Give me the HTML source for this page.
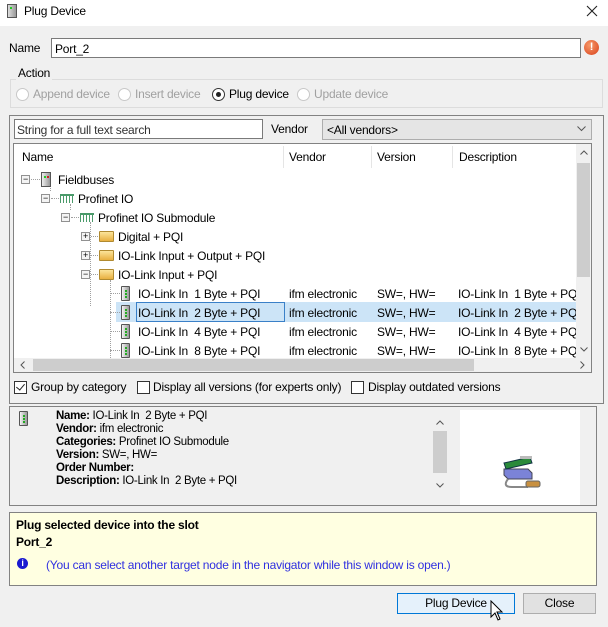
<!DOCTYPE html>
<html><head><meta charset="utf-8"><style>
*{margin:0;padding:0;box-sizing:border-box}
body{width:608px;height:627px;background:#f0f0f0;font-family:"Liberation Sans",sans-serif;font-size:12px;color:#000;position:relative;overflow:hidden;letter-spacing:-0.2px}
.a{position:absolute;white-space:nowrap}
.t{position:absolute;white-space:nowrap;line-height:14px}
.g{color:#a0a0a0}
.rad{position:absolute;width:13px;height:13px;border-radius:50%;border:1px solid #c8c8c8;background:#fff}
.cb{position:absolute;width:13px;height:13px;border:1px solid #333;background:#fff}
.exp{position:absolute;width:9px;height:9px;border:1px solid #919191;background:#f4f4f4;font-size:9px;line-height:7px;text-align:center;color:#000}
.dot{position:absolute;border-top:1px dotted #a0a0a0;height:0}
.vdot{position:absolute;border-left:1px dotted #a0a0a0;width:0}
.dev{position:absolute;width:9px;height:15px;border:1px solid #555;background:linear-gradient(90deg,#f4f4f4,#999);border-radius:1px}
.dev:after{content:"";position:absolute;left:3px;top:3px;width:2px;height:8px;background:repeating-linear-gradient(#2a2 0 2px,transparent 2px 3px)}
.fold{position:absolute;width:15px;height:11px;background:linear-gradient(#fbe49a,#e8b040);border:1px solid #b08a30;border-radius:1px}
.net{position:absolute;width:14px;height:9px;border-top:2px solid #4a9a6a;background:repeating-linear-gradient(90deg,#4a9a6a 0 1px,transparent 1px 3px)}
svg.c{position:absolute}
</style></head><body>
<div class="a" style="left:0;top:0;width:608px;height:26px;background:#fff"></div>
<div class="a" style="left:7px;top:4px;width:10px;height:14px;border:1px solid #555;background:linear-gradient(90deg,#ddd,#999)"><div style="position:absolute;left:2px;top:2px;width:2px;height:2px;background:#2c2"></div></div>
<div class="a" style="left:24px;top:4px;font-size:12px">Plug Device</div>
<svg class="c" style="left:586px;top:5px" width="12" height="12" viewBox="0 0 12 12"><path d="M1 1L11 11M11 1L1 11" stroke="#222" stroke-width="1.1"/></svg>
<div class="a" style="left:9px;top:41px">Name</div>
<div class="a" style="left:51px;top:38px;width:530px;height:20px;border:1px solid #7a7a7a;background:#fff;padding:3px 3px">Port_2</div>
<div class="a" style="left:584px;top:40px;width:15px;height:15px;border-radius:50%;background:radial-gradient(circle at 40% 35%,#f79a6a,#d8401a);color:#fff;font-weight:bold;font-size:11px;text-align:center;line-height:15px">!</div>
<div class="a" style="left:10px;top:79px;width:593px;height:29px;border:1px solid #dcdcdc"></div>
<div class="a" style="left:16px;top:66px;background:#f0f0f0;padding:0 2px">Action</div>
<div class="rad" style="left:16px;top:88px"></div><div class="a g" style="left:33px;top:87px">Append device</div>
<div class="rad" style="left:118px;top:88px"></div><div class="a g" style="left:135px;top:87px">Insert device</div>
<div class="rad" style="left:212px;top:88px;border-color:#333"><div style="position:absolute;left:3px;top:3px;width:5px;height:5px;border-radius:50%;background:#222"></div></div><div class="a" style="left:229px;top:87px">Plug device</div>
<div class="rad" style="left:297px;top:88px"></div><div class="a g" style="left:314px;top:87px">Update device</div>
<div class="a" style="left:9px;top:115px;width:595px;height:289px;border:1px solid #828282"></div>
<div class="a" style="left:14px;top:119px;width:249px;height:20px;border:1px solid #7a7a7a;background:#fff;padding:3px 2px;color:#333">String for a full text search</div>
<div class="a" style="left:271px;top:122px">Vendor</div>
<div class="a" style="left:322px;top:119px;width:270px;height:21px;border:1px solid #adadad;background:#e5e5e5;padding:3px 4px">&lt;All vendors&gt;</div>
<svg class="c" style="left:577px;top:126px" width="9" height="6" viewBox="0 0 9 6"><path d="M0.5 0.5L4.5 4.5L8.5 0.5" fill="none" stroke="#555"/></svg>
<div class="a" style="left:13px;top:143px;width:579px;height:230px;border:1px solid #828282;background:#fff;overflow:hidden">
 <div class="a" style="left:269px;top:2px;width:1px;height:22px;background:#e5e5e5"></div>
 <div class="a" style="left:357px;top:2px;width:1px;height:22px;background:#e5e5e5"></div>
 <div class="a" style="left:438px;top:2px;width:1px;height:22px;background:#e5e5e5"></div>
 <div class="t" style="left:8px;top:6px">Name</div>
 <div class="t" style="left:275px;top:6px">Vendor</div>
 <div class="t" style="left:363px;top:6px">Version</div>
 <div class="t" style="left:445px;top:6px">Description</div>
 <div class="a" style="left:102px;top:158px;width:460px;height:20px;background:#cce4f7"></div>
 <div class="a" style="left:122px;top:158px;width:149px;height:20px;border:1px solid #3a80c8"></div>
 <div class="vdot" style="left:36px;top:41px;height:6px"></div>
 <div class="vdot" style="left:56px;top:60px;height:6px"></div>
 <div class="vdot" style="left:76px;top:78px;height:84px"></div>
 <div class="vdot" style="left:96px;top:136px;height:80px"></div>
 <div class="exp" style="left:7px;top:31px">−</div><div class="dot" style="left:17px;top:35px;width:9px"></div>
 <div class="a" style="left:27px;top:28px;width:10px;height:15px;border:1px solid #555;background:linear-gradient(90deg,#eee,#999)"><div style="position:absolute;left:2px;top:3px;width:2px;height:2px;background:#2c2"></div><div style="position:absolute;left:5px;top:3px;width:2px;height:2px;background:#c22"></div></div>
 <div class="t" style="left:44px;top:29px">Fieldbuses</div>
 <div class="exp" style="left:27px;top:50px">−</div><div class="dot" style="left:37px;top:54px;width:8px"></div>
 <div class="net" style="left:46px;top:50px"></div><div class="t" style="left:64px;top:48px">Profinet IO</div>
 <div class="exp" style="left:47px;top:69px">−</div><div class="dot" style="left:57px;top:73px;width:8px"></div>
 <div class="net" style="left:66px;top:69px"></div><div class="t" style="left:84px;top:67px">Profinet IO Submodule</div>
 <div class="exp" style="left:67px;top:88px">+</div><div class="dot" style="left:77px;top:92px;width:7px"></div>
 <div class="fold" style="left:85px;top:87px"></div><div class="t" style="left:104px;top:86px">Digital + PQI</div>
 <div class="exp" style="left:67px;top:107px">+</div><div class="dot" style="left:77px;top:111px;width:7px"></div>
 <div class="fold" style="left:85px;top:106px"></div><div class="t" style="left:104px;top:105px">IO-Link Input + Output + PQI</div>
 <div class="exp" style="left:67px;top:126px">−</div><div class="dot" style="left:77px;top:130px;width:7px"></div>
 <div class="fold" style="left:85px;top:125px"></div><div class="t" style="left:104px;top:124px">IO-Link Input + PQI</div>
 <div class="dot" style="left:96px;top:149px;width:10px"></div><div class="dev" style="left:107px;top:142px"></div>
 <div class="t" style="left:124px;top:143px">IO-Link In&nbsp; 1 Byte + PQI</div><div class="t" style="left:275px;top:143px">ifm electronic</div><div class="t" style="left:363px;top:143px">SW=, HW=</div><div class="t" style="left:444px;top:143px">IO-Link In&nbsp; 1 Byte + PQI</div>
 <div class="dot" style="left:96px;top:168px;width:10px"></div><div class="dev" style="left:107px;top:161px"></div>
 <div class="t" style="left:124px;top:162px">IO-Link In&nbsp; 2 Byte + PQI</div><div class="t" style="left:275px;top:162px">ifm electronic</div><div class="t" style="left:363px;top:162px">SW=, HW=</div><div class="t" style="left:444px;top:162px">IO-Link In&nbsp; 2 Byte + PQI</div>
 <div class="dot" style="left:96px;top:187px;width:10px"></div><div class="dev" style="left:107px;top:180px"></div>
 <div class="t" style="left:124px;top:181px">IO-Link In&nbsp; 4 Byte + PQI</div><div class="t" style="left:275px;top:181px">ifm electronic</div><div class="t" style="left:363px;top:181px">SW=, HW=</div><div class="t" style="left:444px;top:181px">IO-Link In&nbsp; 4 Byte + PQI</div>
 <div class="dot" style="left:96px;top:206px;width:10px"></div><div class="dev" style="left:107px;top:199px"></div>
 <div class="t" style="left:124px;top:200px">IO-Link In&nbsp; 8 Byte + PQI</div><div class="t" style="left:275px;top:200px">ifm electronic</div><div class="t" style="left:363px;top:200px">SW=, HW=</div><div class="t" style="left:444px;top:200px">IO-Link In&nbsp; 8 Byte + PQI</div>
 <div class="a" style="left:562px;top:0;width:15px;height:214px;background:#f0f0f0"></div>
 <div class="a" style="left:563px;top:19px;width:13px;height:114px;background:#cdcdcd"></div>
 <svg class="c" style="left:566px;top:6px" width="8" height="5" viewBox="0 0 8 5"><path d="M0.5 4.5L4 1L7.5 4.5" fill="none" stroke="#555"/></svg>
 <svg class="c" style="left:566px;top:203px" width="8" height="5" viewBox="0 0 8 5"><path d="M0.5 0.5L4 4L7.5 0.5" fill="none" stroke="#555"/></svg>
 <div class="a" style="left:0;top:214px;width:577px;height:14px;background:#f0f0f0"></div>
 <div class="a" style="left:19px;top:215px;width:441px;height:12px;background:#cdcdcd"></div>
 <svg class="c" style="left:6px;top:217px" width="5" height="8" viewBox="0 0 5 8"><path d="M4.5 0.5L1 4L4.5 7.5" fill="none" stroke="#555"/></svg>
 <svg class="c" style="left:566px;top:217px" width="5" height="8" viewBox="0 0 5 8"><path d="M0.5 0.5L4 4L0.5 7.5" fill="none" stroke="#555"/></svg>
</div>
<div class="cb" style="left:14px;top:381px"><div style="position:absolute;left:3px;top:0px;width:5px;height:8px;border-right:1.5px solid #222;border-bottom:1.5px solid #222;transform:rotate(40deg)"></div></div>
<div class="a" style="left:31px;top:380px">Group by category</div>
<div class="cb" style="left:137px;top:381px"></div><div class="a" style="left:153px;top:380px">Display all versions (for experts only)</div>
<div class="cb" style="left:351px;top:381px"></div><div class="a" style="left:368px;top:380px">Display outdated versions</div>
<div class="a" style="left:9px;top:406px;width:588px;height:100px;border:1px solid #828282"></div>
<div class="dev" style="left:19px;top:411px"></div>
<div class="a" style="left:56px;top:410px;font-size:11.5px;line-height:13px;letter-spacing:-0.3px">
<b>Name:</b> IO-Link In&nbsp; 2 Byte + PQI<br><b>Vendor:</b> ifm electronic<br><b>Categories:</b> Profinet IO Submodule<br><b>Version:</b> SW=, HW=<br><b>Order Number:</b><br><b>Description:</b> IO-Link In&nbsp; 2 Byte + PQI</div>
<div class="a" style="left:432px;top:410px;width:16px;height:84px;background:#f0f0f0"></div>
<div class="a" style="left:433px;top:431px;width:14px;height:42px;background:#cdcdcd"></div>
<svg class="c" style="left:436px;top:420px" width="8" height="5" viewBox="0 0 8 5"><path d="M0.5 4.5L4 1L7.5 4.5" fill="none" stroke="#555"/></svg>
<svg class="c" style="left:436px;top:483px" width="8" height="5" viewBox="0 0 8 5"><path d="M0.5 0.5L4 4L7.5 0.5" fill="none" stroke="#555"/></svg>
<div class="a" style="left:460px;top:410px;width:120px;height:95px;background:#fff"></div>
<svg class="c" style="left:498px;top:443px" width="48" height="48" viewBox="0 0 48 48">
<path d="M6 26 L30 26 L34 30 L34 36 L10 36 L6 32Z" fill="#7b83d8" stroke="#445"/>
<path d="M6 20 L32 14 L34 20 L8 26Z" fill="#2a8a3a" stroke="#134"/>
<rect x="22" y="13" width="12" height="3" fill="#bbb"/>
<path d="M10 36 Q4 44 14 44 L30 44" fill="none" stroke="#888" stroke-width="2"/>
<rect x="28" y="38" width="14" height="6" rx="2" fill="#c89040" stroke="#666"/>
</svg>
<div class="a" style="left:9px;top:512px;width:588px;height:74px;border:1px solid #828282;background:#ffffe1"></div>
<div class="a" style="left:16px;top:518px;font-weight:bold">Plug selected device into the slot</div>
<div class="a" style="left:16px;top:535px;font-weight:bold">Port_2</div>
<div class="a" style="left:17px;top:558px;width:11px;height:11px;border-radius:50%;background:#1a1ad0;color:#fff;font-size:9px;font-weight:bold;text-align:center;line-height:11px">i</div>
<div class="a" style="left:46px;top:558px;color:#3030e0">(You can select another target node in the navigator while this window is open.)</div>
<div class="a" style="left:397px;top:593px;width:118px;height:21px;border:1px solid #0078d7;background:#e5f1fb;text-align:center;line-height:19px">Plug Device</div>
<div class="a" style="left:523px;top:593px;width:73px;height:21px;border:1px solid #adadad;background:#e1e1e1;text-align:center;line-height:19px">Close</div>
<svg class="c" style="left:490px;top:600px" width="14" height="22" viewBox="0 0 14 22"><path d="M1 1 L1 17 L5 13 L8 20 L10 19 L7 12 L12 12Z" fill="#fff" stroke="#000"/></svg>
</body></html>
